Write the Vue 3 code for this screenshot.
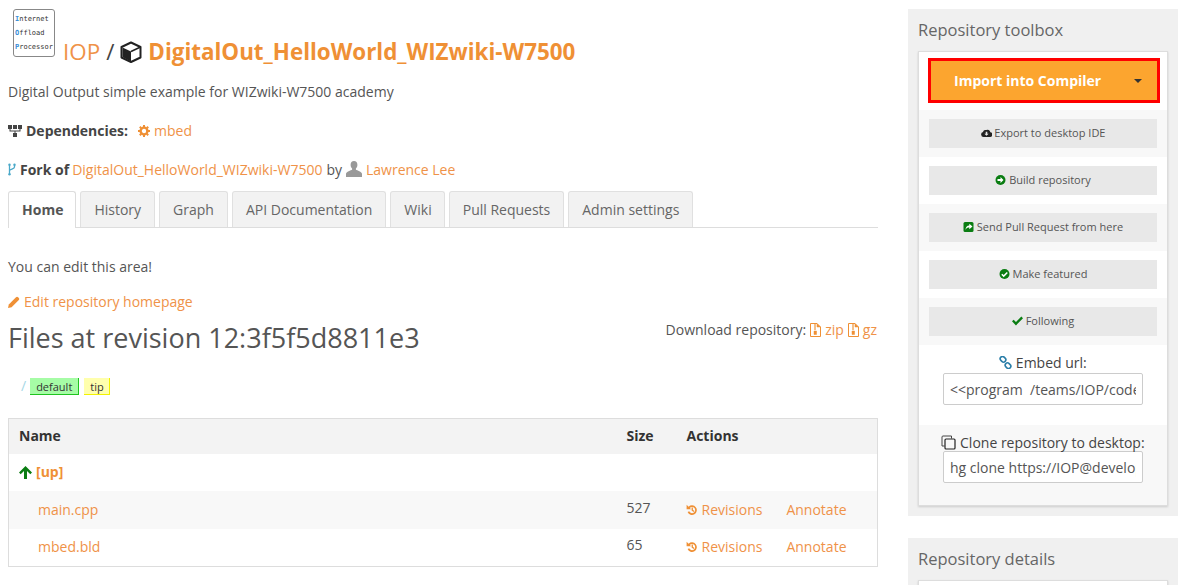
<template>
  <div class="page">
    <main class="main">
      <div class="title-row">
        <div class="logo">
          <span><b>I</b>nternet</span>
          <span><b>O</b>ffload</span>
          <span><b>P</b>rocessor</span>
        </div>
        <h1>
          <a class="team">IOP</a>
          <span class="sep">/</span>
          <svg class="cube" viewBox="0 0 22 22"><path d="M11 1.500 20.500 6v10.500L11 21 1.500 16.500V6z" fill="#fff" stroke="#222" stroke-width="2" stroke-linejoin="round"/><path d="M11 10.500 2.500 6.500V16L11 20.500z" fill="#222"/><path d="M11 10.500 20 6.300" stroke="#222" stroke-width="1.500"/></svg>
          <a class="repo">DigitalOut_HelloWorld_WIZwiki-W7500</a>
        </h1>
      </div>

      <p class="desc">Digital Output simple example for WIZwiki-W7500 academy</p>

      <p class="deps">
        <svg class="ic sitemap" viewBox="0 0 14 12"><path d="M0 0h4v4H0zM5 0h4v4H5zM10 0h4v4h-4zM1.500 4h1v1.500h9V4h1v2.500h-5V8H9v4H5V8h1.500V6.500h-5z" fill="#444"/></svg>
        <b>Dependencies:</b>
        <a class="dep-link">
          <svg class="ic cog" viewBox="0 0 12 12"><circle cx="6" cy="6" r="3.400" fill="none" stroke="#ef9035" stroke-width="2.400"/><path d="M6 0v2M6 10v2M0 6h2M10 6h2M1.800 1.800l1.400 1.400M8.800 8.800l1.400 1.400M1.800 10.200l1.400-1.400M8.800 3.200l1.400-1.400" stroke="#ef9035" stroke-width="2"/></svg>
          <span>mbed</span>
        </a>
      </p>

      <p class="fork">
        <svg class="ic fork-ic" viewBox="0 0 8 13"><path d="M1.500 2v9M6.500 2v2C6.500 6 3 6 1.500 7.500" fill="none" stroke="#4aa8c8" stroke-width="1.300"/><circle cx="1.500" cy="1.800" r="1.200" fill="#4aa8c8"/><circle cx="6.500" cy="1.800" r="1.200" fill="#4aa8c8"/><circle cx="1.500" cy="11.200" r="1.200" fill="#4aa8c8"/></svg>
        <b>Fork of</b>
        <a class="fork-link">DigitalOut_HelloWorld_WIZwiki-W7500</a>
        <span class="by">by</span>
        <svg class="ic user" viewBox="0 0 16 16"><path d="M8 0c2.200 0 3.400 1.600 3.400 3.800 0 1.600-.6 3-1.500 3.800v1.200c1 .7 6.100 1.800 6.100 4.200v3H0v-3c0-2.400 5.100-3.500 6.100-4.200V7.600C5.200 6.800 4.600 5.400 4.600 3.800 4.600 1.600 5.800 0 8 0z" fill="#999"/></svg>
        <a class="user-link">Lawrence Lee</a>
      </p>

      <ul class="tabs">
        <li v-for="t in tabs" :key="t" :class="{ active: t === 'Home', tight: t === 'Wiki' }">{{ t }}</li>
      </ul>

      <p class="edit-note">You can edit this area!</p>

      <p class="edit-link">
        <a>
          <svg class="ic pencil" viewBox="0 0 12 12"><path d="M0 12l.8-3.600L8 1.200a1.500 1.500 0 0 1 2.100 0l.7.700a1.500 1.500 0 0 1 0 2.100L3.600 11.200z" fill="#ef9035"/></svg>
          <span class="after-ic">Edit repository homepage</span>
        </a>
      </p>

      <div class="files-head">
        <h2>Files at revision 12:3f5f5d8811e3</h2>
        <div class="download">
          <span>Download repository:</span>
          <svg class="ic zip" viewBox="0 0 11 14"><path d="M.5.500h6.500l3.500 3.500v9.500H.5z" fill="#fff" stroke="#ef9035"/><path d="M7 .5V4h3.500M4.500 1.500h1v1h-1zM4.500 3.500h1v1h-1zM4.500 5.500h1v1h-1zM4 8h2.500v3.500H4z" fill="#ef9035" stroke="#ef9035" stroke-width=".5"/></svg>
          <a>zip</a>
          <svg class="ic zip" viewBox="0 0 11 14"><path d="M.5.500h6.500l3.500 3.500v9.500H.5z" fill="#fff" stroke="#ef9035"/><path d="M7 .5V4h3.500M4.500 1.500h1v1h-1zM4.500 3.500h1v1h-1zM4.500 5.500h1v1h-1zM4 8h2.500v3.500H4z" fill="#ef9035" stroke="#ef9035" stroke-width=".5"/></svg>
          <a>gz</a>
        </div>
      </div>

      <div class="crumbs">
        <span class="slash">/</span>
        <span class="tag tag-default">default</span>
        <span class="tag tag-tip">tip</span>
      </div>

      <table class="files">
        <thead>
          <tr>
            <th class="c-name">Name</th>
            <th class="c-size">Size</th>
            <th class="c-actions">Actions</th>
          </tr>
        </thead>
        <tbody>
          <tr class="up-row">
            <td colspan="3">
              <svg class="ic up" viewBox="0 0 13 13"><path d="M6.500 0 13 6.500l-1.700 1.700-3.300-3.300V13H5V4.900L1.700 8.200 0 6.500z" fill="#0a7d12"/></svg>
              <a class="up-link">[up]</a>
            </td>
          </tr>
          <tr v-for="f in files" :key="f.name" class="file-row">
            <td class="file-name"><a>{{ f.name }}</a></td>
            <td class="file-size">{{ f.size }}</td>
            <td class="actions">
              <a class="rev">
                <svg class="ic hist" viewBox="0 0 12 12"><path d="M2.600 2.700A4.800 4.800 0 1 1 1.600 8l1.600-.7A3.100 3.100 0 1 0 3.800 3.900L5.200 5.300H.6V.7z" fill="#ef9035"/><path d="M5.600 3.400h1.300v2.400l1.500 1.300-.8 1-2-1.700z" fill="#ef9035"/></svg>
                <span class="after-ic">Revisions</span>
              </a>
              <a>Annotate</a>
            </td>
          </tr>
        </tbody>
      </table>
    </main>

    <aside class="side">
      <section class="panel first">
        <h3>Repository toolbox</h3>
        <div class="card">
          <div class="import-row">
            <button class="import"><span>Import into Compiler</span><i class="caret"></i></button>
          </div>
          <div class="tool-row">
            <button class="tool">
              <svg class="ic tool-ic" viewBox="0 0 14 10"><path d="M3.200 10A3.200 3.200 0 0 1 2.600 3.700 3 3 0 0 1 6.600 1.300 3.600 3.600 0 0 1 11.900 4 3 3 0 0 1 11 10z" fill="#222"/><path d="M6 3.500h2v2.300h1.700L7 8.500 4.300 5.800H6z" fill="#e8e8e8"/></svg>
              Export to desktop IDE
            </button>
          </div>
          <div class="tool-row">
            <button class="tool">
              <svg class="ic tool-ic" viewBox="0 0 10 10"><circle cx="5" cy="5" r="5" fill="#0a7d12"/><path d="M5 2l3 3-3 3V6H2V4h3z" fill="#fff"/></svg>
              Build repository
            </button>
          </div>
          <div class="tool-row">
            <button class="tool">
              <svg class="ic tool-ic" viewBox="0 0 10 10"><rect width="10" height="10" rx="1.500" fill="#0a7d12"/><path d="M5.800 1.800 9 4.500 5.800 7.200V5.600C4 5.600 2.800 6.200 2 8c0-3 1.500-4.500 3.800-4.600z" fill="#fff"/></svg>
              Send Pull Request from here
            </button>
          </div>
          <div class="tool-row">
            <button class="tool">
              <svg class="ic tool-ic" viewBox="0 0 10 10"><circle cx="5" cy="5" r="5" fill="#0a7d12"/><path d="M2.300 5.200 4.200 7.100 7.800 3.500" fill="none" stroke="#fff" stroke-width="1.500"/></svg>
              Make featured
            </button>
          </div>
          <div class="tool-row">
            <button class="tool">
              <svg class="ic tool-ic" viewBox="0 0 10 8"><path d="M0 4.300 1.500 2.800 3.600 4.900 8.500 0 10 1.500 3.600 8z" fill="#0a7d12"/></svg>
              Following
            </button>
          </div>
          <div class="field-row">
            <label>
              <svg class="ic link-ic" viewBox="0 0 13 13"><g fill="none" stroke="#2a7ea8" stroke-width="1.600"><rect x="1" y="1" width="6" height="4.600" rx="2.300" transform="rotate(45 4 3.300)"/><rect x="6" y="7.400" width="6" height="4.600" rx="2.300" transform="rotate(45 9 9.700)"/></g></svg>
              Embed url:
            </label>
            <input class="field" readonly value="<<program  /teams/IOP/code/DigitalOut_HelloWorld_WIZwiki-W7500/>>">
          </div>
          <div class="field-row clone">
            <label>
              <svg class="ic copy" viewBox="0 0 15 15"><path d="M3.500 11H1V2a1 1 0 0 1 1-1h8.500v2.500" fill="none" stroke="#444" stroke-width="1"/><rect x="4" y="4" width="10" height="10" rx="1" fill="none" stroke="#222" stroke-width="1.200"/></svg>
              Clone repository to desktop:
            </label>
            <input class="field" readonly value="hg clone https://IOP@developer.mbed.org/teams/IOP/code/DigitalOut/">
          </div>
        </div>
      </section>

      <section class="panel details">
        <h3>Repository details</h3>
        <div class="card card-empty"></div>
      </section>
    </aside>
  </div>
</template>

<script setup>
const tabs = ['Home', 'History', 'Graph', 'API Documentation', 'Wiki', 'Pull Requests', 'Admin settings']

const files = [
  { name: 'main.cpp', size: 527 },
  { name: 'mbed.bld', size: 65 }
]
</script>

<style>
html, body { margin: 0; background: #fff; overflow: hidden; }
</style>

<style scoped>
.page { display: flex; height: 585px; overflow: hidden; padding: 9px 1px 0 8px; box-sizing: border-box; gap: 30px; font-family: "Open Sans", sans-serif; font-size: 14px; line-height: 20px; color: #555; }
.main { width: 870px; flex: none; }
.side { width: 270px; flex: none; }
a { color: #ef9248; text-decoration: none; }
p { margin: 0; }
.ic { display: inline-block; vertical-align: -1px; }
.after-ic { margin-left: 4px; }

.title-row { display: flex; height: 48px; padding-left: 5px; }
.logo { width: 42px; height: 48px; box-sizing: border-box; border: 1px solid #888; border-radius: 3px; display: flex; flex-direction: column; justify-content: space-around; padding: 2px 0 2px 1px; font-family: "DejaVu Sans Mono", monospace; font-size: 7px; line-height: 8px; color: #333; background: #fff; white-space: nowrap; overflow: hidden; }
.logo b { color: #3d8fd8; font-weight: 700; }
h1 { margin: 0 0 0 8px; font-size: 22.4px; line-height: 30px; font-weight: 400; display: flex; align-items: center; height: 30px; position: relative; top: 28px; }
.team { color: #ef9248; }
.sep { color: #444; margin: 0 6px; }
.cube { width: 22px; height: 22px; margin-right: 6px; }
.repo { font-weight: 700; color: #ef9035; }

.desc { margin-top: 25px; }
.deps { margin-top: 19px; }
.deps b, .fork b { color: #444; font-weight: 700; }
.sitemap { width: 14px; height: 12px; margin-right: 4px; }
.dep-link { margin-left: 10px; }
.cog { width: 12px; height: 12px; margin-right: 4px; }
.fork { margin-top: 19px; }
.fork-ic { width: 8px; height: 13px; margin-right: 4px; }
.fork-link { margin-left: 3px; }
.by { margin: 0 4px; }
.user { width: 16px; height: 16px; vertical-align: -2px; }
.user-link { margin-left: 4px; }

.tabs { list-style: none; margin: 11px 0 0; padding: 0; display: flex; gap: 4px; border-bottom: 1px solid #ddd; height: 36px; }
.tabs li { box-sizing: border-box; height: 36px; padding: 8px 13px; background: #f2f2f2; border: 1px solid #e0e0e0; border-bottom: none; border-radius: 3px 3px 0 0; white-space: nowrap; color: #666; }
.tabs li.active { height: 37px; background: #fff; border-color: #ddd; font-weight: 700; color: #555; padding-right: 12px; }
.tabs li.tight { padding-right: 12px; }

.edit-note { margin-top: 29px; }
.edit-link { margin-top: 15px; }
.pencil { width: 12px; height: 12px; }

.files-head { display: flex; justify-content: space-between; margin-top: 6px; height: 48px; }
h2 { margin: 0; font-size: 27px; line-height: 40px; font-weight: 400; color: #555; }
.download { padding: 2px 1px 0 0; }
.download span { margin-right: 4px; }
.download a { margin-left: 4px; }
.download a:nth-of-type(1) { margin-right: 4px; }
.zip { width: 11px; height: 14px; vertical-align: -2px; }

.crumbs { display: flex; align-items: center; height: 18px; padding-left: 13px; margin-top: 11px; font-size: 11px; color: #333; }
.slash { font-size: 14px; color: #a6d8e6; margin-right: 4px; }
.tag { box-sizing: border-box; height: 17px; line-height: 15px; padding: 1px 6px 0; margin-right: 5px; }
.tag-default { background: #a6fca6; border-right: 1px solid #1fc41f; border-bottom: 1px solid #1fc41f; }
.tag-tip { background: #ffffad; border-right: 1px solid #f2f200; border-bottom: 1px solid #f2f200; padding: 1px 5px 0 6px; }

.files { width: 870px; margin-top: 23px; border-collapse: collapse; border: 1px solid #ddd; table-layout: fixed; }
.files th { box-sizing: border-box; height: 35px; padding: 0; text-align: left; background: #f3f3f3; color: #333; font-weight: 700; }
.c-name { width: 617px; padding-left: 10px !important; }
.c-size { width: 60px; padding-left: 1px !important; }
.c-actions { padding-left: 1px !important; }
.up-row td { box-sizing: border-box; height: 37px; padding: 0 0 0 10px; background: #fff; }
.up { width: 13px; height: 13px; vertical-align: -2px; }
.up-link { color: #ef9035; font-weight: 700; margin-left: 4px; }
.file-row td { box-sizing: border-box; height: 38px; padding: 0; }
.file-row:nth-child(even) td { background: #f8f8f8; }
.file-name { padding-left: 29px !important; }
.file-size { padding-left: 1px !important; padding-bottom: 4px !important; }
.actions { white-space: nowrap; }
.rev { margin-right: 24px; }
.hist { width: 12px; height: 12px; }

.panel { background: #f0f0f0; padding: 10px; }
.panel h3 { margin: 0 0 10px; font-size: 16.500px; line-height: 22px; font-weight: 400; color: #666; }
.card { background: #fff; border: 1px solid #ddd; box-shadow: 0 1px 2px rgba(0,0,0,.15); }
.import-row { padding: 6px 7px 6px 9px; height: 46px; }
.import { width: 232px; height: 45px; box-sizing: border-box; border: 3px solid #f00; background: #fca52f; color: #fff; font: 700 14px "Open Sans", sans-serif; display: flex; align-items: center; padding: 0 15px 0 23px; justify-content: space-between; }
.caret { width: 0; height: 0; border: 4px solid transparent; border-top: 4px solid #333; border-bottom: none; }
.tool-row { padding: 9px 10px; height: 29px; }
.tool-row:nth-child(even), .field-row:nth-child(even) { background: #f8f8f8; }
.tool { display: block; width: 228px; height: 29px; border: none; background: #e8e8e8; color: #555; font: 400 11px "Open Sans", sans-serif; padding: 0 0 2px; }
.tool-ic { width: 11px; height: 10px; vertical-align: -1px; }
.field-row { box-sizing: border-box; height: 80px; padding-top: 8px; text-align: center; }
.field-row label { display: block; line-height: 20px; color: #444; }
.clone label { margin-bottom: -2px; }
.link-ic { width: 13px; height: 13px; vertical-align: -1px; }
.copy { width: 15px; height: 15px; vertical-align: -2px; }
.field { display: block; box-sizing: border-box; width: 200px; height: 32px; margin: 0 auto; border: 1px solid #ccc; border-radius: 2px; padding: 0 6px; background: #fff; font: 400 14px "Open Sans", sans-serif; color: #555; outline: none; }
.details { margin-top: 22px; padding-bottom: 40px; }
.card-empty { height: 60px; }
</style>
